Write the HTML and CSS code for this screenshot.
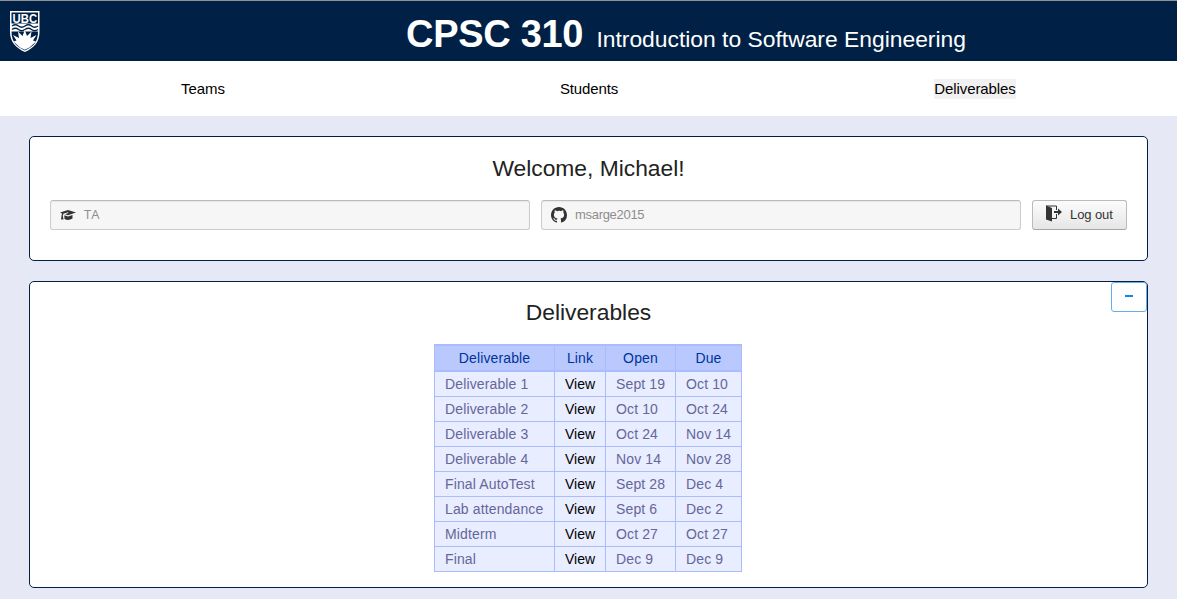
FILE: index.html
```html
<!DOCTYPE html>
<html lang="en">
<head>
<meta charset="utf-8">
<title>CPSC 310</title>
<link rel="stylesheet" href="styles.css">
</head>
<body>
<header class="banner">
  <svg class="crest" width="30" height="41" viewBox="0 0 30 41">
    <path d="M0 0H29.500V21C29.500 31 24 37 14.800 41C6 37 0 31 0 21Z" fill="#fff"/>
    <path d="M1.500 1.500H28V12.500H1.500Z" fill="#002145"/>
    <text x="14.8" y="11.500" text-anchor="middle" textLength="24.5" lengthAdjust="spacingAndGlyphs" class="crest-text">UBC</text>
    <path d="M2 15q3.500-2.500 6.500 0t6.500 0t6.500 0t6.500 0M2 18.500q3.500-2.500 6.500 0t6.500 0t6.500 0t6.500 0" fill="none" stroke="#002145" stroke-width="1.300"/>
    <path d="M1.500 20.500H28C28 31 23 36 14.800 39.500C7 36 1.500 31 1.500 20.500Z" fill="#002145"/>
    <path d="M14.800 19L17 25L21.500 20.500L20.500 27L26.500 24L23 29.500L26 30.500L19.500 36.500L14.800 38.800L10 36.500L3.500 30.500L6.500 29.500L3 24L9 27L8 20.500L12.500 25Z" fill="#fff"/>
  </svg>
  <h1 class="title">CPSC 310 <span class="subtitle">Introduction to Software Engineering</span></h1>
</header>
<nav class="nav">
  <div class="nav-item"><a class="link">Teams</a></div>
  <div class="nav-item"><a class="link students">Students</a></div>
  <div class="nav-item"><a class="link active">Deliverables</a></div>
</nav>
<main class="content">
  <section class="card welcome">
    <h2 class="heading">Welcome, Michael!</h2>
    <div class="fields">
      <div class="field">
        <svg class="icon" width="16" height="16" viewBox="0 0 16 16"><path d="M0 5.500L8 3L16 5.500L8 8.300L5 7.300L8.500 6L8 5.300L3.500 6.800L2.800 8.500L3.500 12.500H1L1.600 8.500L2 6.500ZM4.300 8.200L8 9.500L12.500 8V11.500Q8.500 14 4.500 12Z" fill="#333"/></svg>
        <span class="role">TA</span>
      </div>
      <div class="field">
        <svg class="icon" width="16" height="16" viewBox="0 0 16 16"><path fill="#333" d="M8 0C3.580 0 0 3.580 0 8c0 3.540 2.290 6.530 5.470 7.590.4.070.55-.17.55-.38 0-.19-.01-.82-.01-1.490-2.010.37-2.530-.49-2.690-.94-.09-.23-.48-.94-.82-1.130-.28-.15-.68-.52-.01-.53.63-.01 1.080.58 1.230.82.72 1.210 1.870.87 2.330.66.070-.52.28-.87.51-1.070-1.780-.2-3.640-.89-3.640-3.950 0-.87.31-1.590.82-2.150-.08-.2-.36-1.020.08-2.120 0 0 .67-.21 2.200.82A7.600 7.600 0 0 1 8 3.860c.68 0 1.360.09 2 .27 1.530-1.040 2.200-.82 2.200-.82.44 1.100.16 1.920.08 2.120.51.56.82 1.270.82 2.150 0 3.070-1.870 3.750-3.650 3.950.29.25.54.73.54 1.480 0 1.070-.01 1.930-.01 2.200 0 .21.15.46.55.38A8 8 0 0 0 16 8c0-4.420-3.580-8-8-8z"/></svg>
        <span class="username">msarge2015</span>
      </div>
      <button class="logout">
        <svg class="door" width="16" height="17" viewBox="0 0 16 17"><path d="M0 .5L6 3V16.500L0 14.500Z" fill="#333"/><path d="M0 1H10.500V5M10.500 9V13.500H6" fill="none" stroke="#333"/><path d="M8 6H12V3.500L16 7L12 10.500V8H8Z" fill="#333"/></svg>
        <span class="logout-text">Log out</span>
      </button>
    </div>
  </section>
  <section class="card deliverables">
    <button class="collapse" aria-label="Collapse"><span class="minus"></span></button>
    <h2 class="heading">Deliverables</h2>
    <table class="table">
      <colgroup><col class="c1"><col class="c2"><col class="c3"><col class="c4"></colgroup>
      <thead><tr><th>Deliverable</th><th>Link</th><th>Open</th><th>Due</th></tr></thead>
      <tbody>
        <tr><td>Deliverable 1</td><td class="view">View</td><td>Sept 19</td><td>Oct 10</td></tr>
        <tr><td>Deliverable 2</td><td class="view">View</td><td>Oct 10</td><td>Oct 24</td></tr>
        <tr><td>Deliverable 3</td><td class="view">View</td><td>Oct 24</td><td>Nov 14</td></tr>
        <tr><td>Deliverable 4</td><td class="view">View</td><td>Nov 14</td><td>Nov 28</td></tr>
        <tr><td>Final AutoTest</td><td class="view">View</td><td>Sept 28</td><td>Dec 4</td></tr>
        <tr><td>Lab attendance</td><td class="view">View</td><td>Sept 6</td><td>Dec 2</td></tr>
        <tr><td>Midterm</td><td class="view">View</td><td>Oct 27</td><td>Oct 27</td></tr>
        <tr><td>Final</td><td class="view">View</td><td>Dec 9</td><td>Dec 9</td></tr>
      </tbody>
    </table>
  </section>
</main>
</body>
</html>
```
FILE: styles.css
```css
* { box-sizing: border-box; }
body {
  margin: 0;
  min-height: 599px;
  overflow: hidden;
  background: #e6e9f5;
  color: #222;
  font-family: "Liberation Sans", Arial, sans-serif;
}
.banner {
  display: flex;
  align-items: flex-start;
  height: 61px;
  padding: 10px 0 0 10px;
  border-top: 1px solid #8f9394;
  background: #002145;
  color: #fff;
}
.crest { flex: none; }
.crest-text { fill: #fff; font-size: 12px; font-weight: bold; }
.title {
  margin: 0 0 0 366px;
  font-size: 38px;
  line-height: 46px;
  letter-spacing: -.3px;
  white-space: nowrap;
}
.subtitle { margin-left: 3px; font-size: 22.85px; font-weight: normal; letter-spacing: 0; }
.nav {
  display: grid;
  grid-template-columns: 386px 386px 386px;
  justify-content: start;
  align-items: center;
  height: 55px;
  padding-left: 10px;
  background: #fff;
  color: #000;
  font-size: 15px;
  text-align: center;
}
.link { display: inline-block; height: 20px; line-height: 20px; }
.students { letter-spacing: -.15px; }
.active { background: #f1f1f1; letter-spacing: -.1px; }
.content { display: flex; flex-direction: column; gap: 20px; padding: 20px 29px 0; }
.card { border: 1px solid #002145; border-radius: 5px; background: #fff; }
.welcome { height: 125px; padding: 18px 20px; }
.heading {
  margin: 0;
  font-size: 22.8px;
  line-height: 27px;
  font-weight: normal;
  text-align: center;
}
.fields { display: grid; grid-template-columns: 480px 480px 95px; gap: 11px; margin-top: 18px; }
.field {
  display: flex;
  align-items: center;
  gap: 8px;
  height: 30px;
  padding-left: 9px;
  border: 1px solid #ccc;
  border-top-color: #bbb;
  border-radius: 3px;
  background: #f6f6f6;
  box-shadow: inset 0 1px 1px #e9e9e9;
  color: #8d8d8d;
  font-size: 13px;
}
.role { padding-bottom: 2px; font-family: "Open Sans", sans-serif; }
.username { padding-bottom: 2px; letter-spacing: -.3px; }
.logout {
  display: flex;
  align-items: center;
  gap: 8px;
  height: 30px;
  padding: 0 0 2px 13px;
  border: 1px solid #bbb;
  border-bottom-color: #a5a5a5;
  border-radius: 3px;
  background: linear-gradient(#fcfcfc, #e6e6e6);
  color: #333;
  font: 13px "Liberation Sans", Arial, sans-serif;
}
.door { margin-bottom: 1px; }
.logout-text { letter-spacing: -.1px; }
.deliverables { position: relative; height: 307px; padding-top: 17px; }
.collapse {
  position: absolute;
  top: 0;
  right: 0;
  display: flex;
  justify-content: center;
  align-items: flex-start;
  width: 36px;
  height: 30px;
  padding: 0;
  border: 1px solid #68aeea;
  border-radius: 3px;
  background: #fff;
}
.minus { width: 8px; height: 2px; margin-top: 12px; background: #1385e5; }
.table {
  width: 308px;
  margin: 18px auto 0 404px;
  border-collapse: collapse;
  table-layout: fixed;
  color: #669;
  font-size: 14px;
  line-height: 16px;
  letter-spacing: .13px;
}
.c1 { width: 120px; }
.c2 { width: 51px; }
.c3 { width: 70px; }
.c4 { width: 66px; }
.table th {
  height: 26px;
  padding: 0;
  border: 1px solid #aabcfe;
  border-top-width: 2px;
  border-bottom-width: 2px;
  background: #b9c9fe;
  color: #039;
  font-weight: normal;
}
.table td {
  height: 25px;
  padding: 0 10px;
  border: 1px solid #aabcfe;
  background: #e8edff;
  white-space: nowrap;
}
.table .view { color: #000; letter-spacing: 0; }
```
